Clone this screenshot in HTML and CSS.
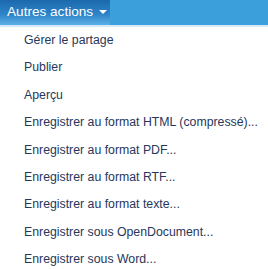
FILE: index.html
```html
<!DOCTYPE html>
<html lang="fr">
<head>
  <meta charset="UTF-8">
  <title>Autres actions</title>
  <link rel="stylesheet" href="styles.css">
</head>
<body>
  <div class="bar">
    <button class="menu-btn">Autres actions <span class="caret"></span></button>
  </div>
  <ul class="menu">
    <li>Gérer le partage</li>
    <li>Publier</li>
    <li>Aperçu</li>
    <li>Enregistrer au format HTML (compressé)...</li>
    <li>Enregistrer au format PDF...</li>
    <li>Enregistrer au format RTF...</li>
    <li>Enregistrer au format texte...</li>
    <li>Enregistrer sous OpenDocument...</li>
    <li>Enregistrer sous Word...</li>
  </ul>
</body>
</html>
```

FILE: styles.css
```css
body {
  margin: 0;
  font-family: "Liberation Sans", Arial, sans-serif;
  background: #fff;
}

/* barre du haut */
.bar {
  display: flex;
  height: 25px;
  background: #3a9fda;
  border-bottom: 2px solid #d6e9f6;
}
.menu-btn {
  display: flex;
  align-items: center;
  gap: 6px;
  width: 110px;
  padding: 0 0 2px 7px;
  border: none;
  color: #fff;
  font-family: inherit;
  font-size: 13.6px;
  background: linear-gradient(to bottom, #1b68ad, #2f86c9 60%, #5db0e6);
}
.caret {
  width: 0;
  height: 0;
  border-left: 4px solid transparent;
  border-right: 4px solid transparent;
  border-top: 4px solid #fff;
}

/* liste */
.menu {
  list-style: none;
  margin: 0;
  padding: 5px 0 0 24px;
}
.menu li {
  height: 27.4px;
  font-size: 12.3px;
  color: #27375a;
  line-height: 16px;
}
```
